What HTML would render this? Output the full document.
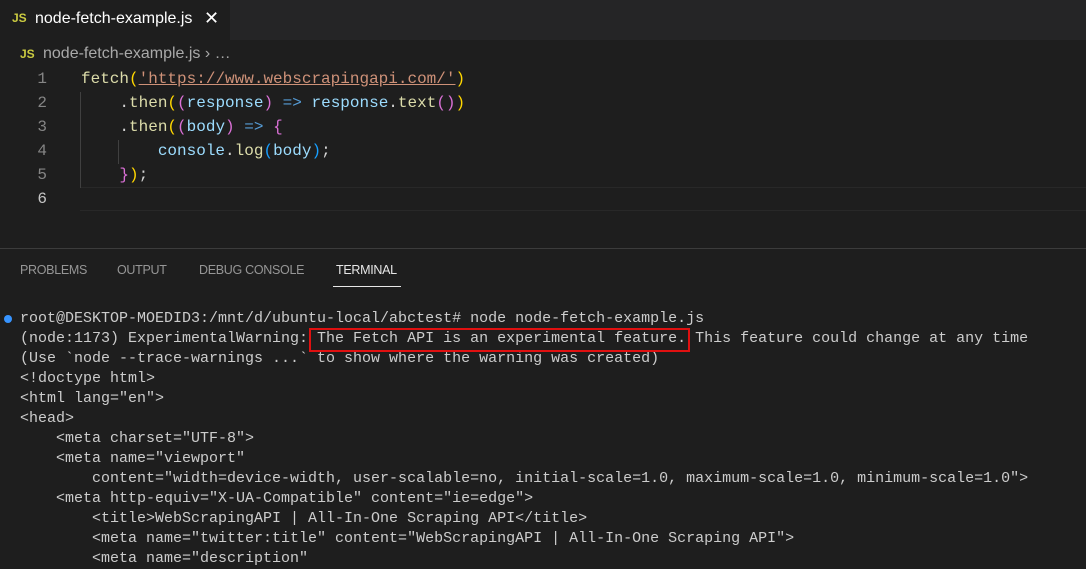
<!DOCTYPE html>
<html><head><style>
body{margin:0;width:1086px;height:566px;background:#1e1e1e;overflow:hidden;position:relative;font-family:"Liberation Sans",sans-serif}
.tabbar{position:absolute;left:0;top:0;width:1086px;height:40px;background:#252526}
.tab{position:absolute;left:0;top:0;width:230px;height:40px;background:#1e1e1e;color:#fff;font-size:16px}
.js{color:#cbcb41;font-weight:bold;font-size:12px;position:absolute}
.code{position:absolute;left:0;top:67px;font-family:"Liberation Mono",monospace;font-size:16px}
.ln{position:absolute;left:0;width:47px;text-align:right;color:#858585;height:24px;line-height:24px}
.cl{position:absolute;left:81px;white-space:pre;line-height:24px;color:#d4d4d4}
.f{color:#dcdcaa}.s{color:#ce9178;text-decoration:underline}.y{color:#ffd700}.p{color:#da70d6}.b{color:#179fff}.v{color:#9cdcfe}.k{color:#569cd6}
.term{position:absolute;left:20px;top:309px;font-family:"Liberation Mono",monospace;font-size:15px;line-height:20px;color:#cccccc;white-space:pre}
.ptab{position:absolute;top:263px;font-size:12.5px;color:#969696;letter-spacing:-0.3px}
</style></head><body>
<div class="tabbar"></div>
<div class="tab"><span class="js" style="left:12px;top:11px">JS</span><span style="position:absolute;left:35px;top:10px">node-fetch-example.js</span><span style="position:absolute;left:204px;top:8px;font-size:18px">✕</span></div>
<div class="js" style="left:20px;top:47px">JS</div>
<div style="position:absolute;left:43px;top:45px;color:#a9a9a9;font-size:16px">node-fetch-example.js › …</div>
<div style="position:absolute;left:80px;top:187px;width:1006px;height:22px;border-top:1px solid #282828;border-bottom:1px solid #282828"></div>
<div style="position:absolute;left:80px;top:92px;width:1px;height:96px;background:#404040"></div>
<div style="position:absolute;left:118px;top:140px;width:1px;height:24px;background:#404040"></div>
<div class="code">
<div class="ln" style="top:0">1</div><div class="ln" style="top:24px">2</div><div class="ln" style="top:48px">3</div><div class="ln" style="top:72px">4</div><div class="ln" style="top:96px">5</div><div class="ln" style="top:120px;color:#c6c6c6">6</div>
<div class="cl" style="top:0"><span class="f">fetch</span><span class="y">(</span><span class="s">'https://www.webscrapingapi.com/'</span><span class="y">)</span></div>
<div class="cl" style="top:24px">    .<span class="f">then</span><span class="y">(</span><span class="p">(</span><span class="v">response</span><span class="p">)</span> <span class="k">=&gt;</span> <span class="v">response</span>.<span class="f">text</span><span class="p">()</span><span class="y">)</span></div>
<div class="cl" style="top:48px">    .<span class="f">then</span><span class="y">(</span><span class="p">(</span><span class="v">body</span><span class="p">)</span> <span class="k">=&gt;</span> <span class="p">{</span></div>
<div class="cl" style="top:72px">        <span class="v">console</span>.<span class="f">log</span><span class="b">(</span><span class="v">body</span><span class="b">)</span>;</div>
<div class="cl" style="top:96px">    <span class="p">}</span><span class="y">)</span>;</div>
</div>
<div style="position:absolute;left:0;top:248px;width:1086px;height:1px;background:#3c3c3c"></div>
<div class="ptab" style="left:20px">PROBLEMS</div>
<div class="ptab" style="left:117px">OUTPUT</div>
<div class="ptab" style="left:199px">DEBUG CONSOLE</div>
<div class="ptab" style="left:336px;color:#e7e7e7">TERMINAL</div>
<div style="position:absolute;left:333px;top:286px;width:68px;height:1px;background:#e7e7e7"></div>
<div style="position:absolute;left:4px;top:315px;width:8px;height:8px;border-radius:50%;background:#3794ff"></div>
<div class="term">root@DESKTOP-MOEDID3:/mnt/d/ubuntu-local/abctest# node node-fetch-example.js
(node:1173) ExperimentalWarning: The Fetch API is an experimental feature. This feature could change at any time
(Use `node --trace-warnings ...` to show where the warning was created)
&lt;!doctype html&gt;
&lt;html lang="en"&gt;
&lt;head&gt;
    &lt;meta charset="UTF-8"&gt;
    &lt;meta name="viewport"
        content="width=device-width, user-scalable=no, initial-scale=1.0, maximum-scale=1.0, minimum-scale=1.0"&gt;
    &lt;meta http-equiv="X-UA-Compatible" content="ie=edge"&gt;
        &lt;title&gt;WebScrapingAPI | All-In-One Scraping API&lt;/title&gt;
        &lt;meta name="twitter:title" content="WebScrapingAPI | All-In-One Scraping API"&gt;
        &lt;meta name="description"</div>
<div style="position:absolute;left:309px;top:328px;width:377px;height:20px;border:2px solid #e01010"></div>
</body></html>
